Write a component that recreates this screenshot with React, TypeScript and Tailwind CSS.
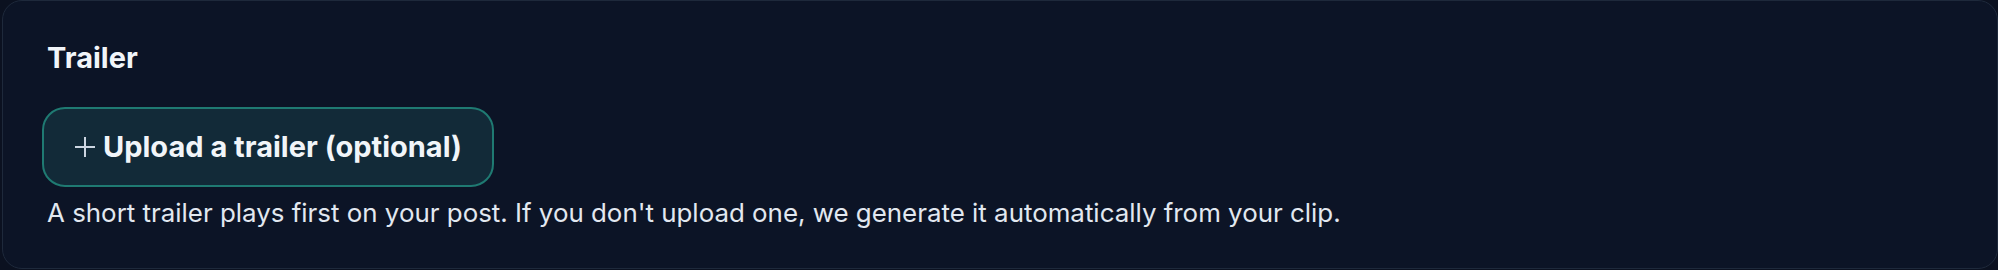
export default function App() {
  return (
    <div className="min-h-[270px] w-full bg-[#0b1120] pl-[2px] pb-[1px]" style={{ fontFamily: 'Inter, "Liberation Sans", sans-serif' }}>
      <div className="h-[269px] rounded-[20px] border border-[#1e293b] bg-[#0c1426] pl-[39px] pt-[39px]">
        {/* Title */}
        <h2 className="ml-[5px] text-[29px] leading-[36px] font-bold text-[#f1f5f9]">Trailer</h2>

        {/* Upload button */}
        <button className="mt-[31px] flex h-[80px] w-[452px] items-center gap-[7px] rounded-[23px] border-2 border-[#1f7a72] bg-[#122a38] pl-[30px] text-[#f1f5f9]">
          <svg width="22" height="22" viewBox="0 0 22 22" className="text-[#cbd5e1]">
            <path d="M11 1v20M1 11h20" stroke="currentColor" strokeWidth="2" />
          </svg>
          <span className="text-[29px] leading-[36px] font-bold">Upload a trailer (optional)</span>
        </button>

        {/* Helper text */}
        <p className="mt-[9px] ml-[5px] text-[25.9px] leading-[34px] text-[#e2e8f0]">
          A short trailer plays first on your post. If you don't upload one, we generate it automatically from your clip.
        </p>
      </div>
    </div>
  );
}
